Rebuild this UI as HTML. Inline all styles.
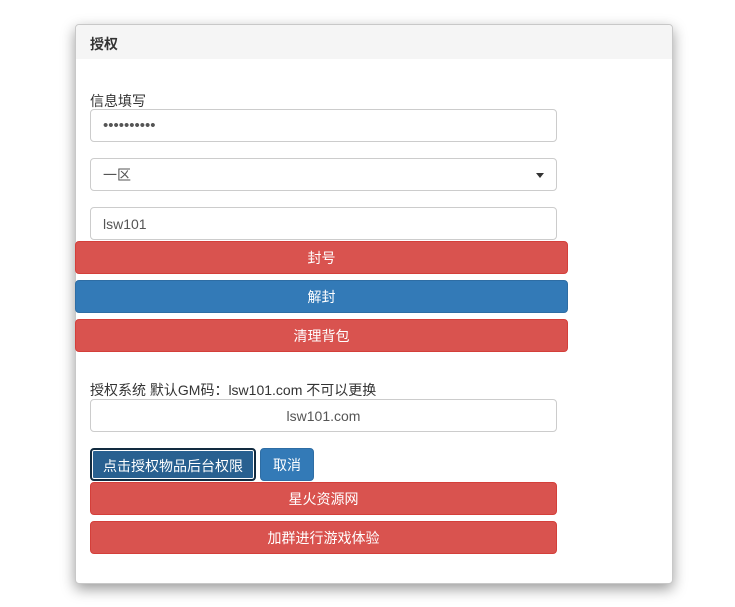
<!DOCTYPE html>
<html><head><meta charset="utf-8"><style>
*{box-sizing:border-box;margin:0;padding:0}
body{width:735px;height:607px;background:#fff;font-family:"Liberation Sans","Noto Sans CJK SC",sans-serif;font-size:14px;color:#333;position:relative;overflow:hidden}
.card{position:absolute;left:75px;top:24px;width:598px;height:560px;border:1px solid #c8c8c8;border-radius:4px;background:#fff;box-shadow:0 5px 14px rgba(0,0,0,.4)}
.hd{position:absolute;left:0;top:0;right:0;height:34px;background:#f5f5f5;border-radius:4px 4px 0 0;font-weight:bold;padding:9px 14px;font-size:14px}
.a{position:absolute}
.inp{position:absolute;left:90px;width:467px;height:33px;border:1px solid #ccc;border-radius:4px;background:#fff;padding:7px 12px;color:#555;line-height:18px}
.btn{position:absolute;height:33px;border-radius:4px;color:#fff;text-align:center;line-height:32px;font-size:14px}
.r{background:#d9534f;border:1px solid #d43f3a}
.b{background:#337ab7;border:1px solid #2e6da4}
.caret{position:absolute;right:12px;top:14px;width:0;height:0;border-left:4px solid transparent;border-right:4px solid transparent;border-top:5px solid #333}
</style></head><body>
<div class="card"><div class="hd">授权</div></div>
<div class="a" style="left:90px;top:91px">信息填写</div>
<div class="inp" style="top:109px;font-size:15px;letter-spacing:0">••••••••••</div>
<div class="inp" style="top:158px">一区<span class="caret"></span></div>
<div class="inp" style="top:207px">lsw101</div>
<div class="btn r" style="left:75px;top:241px;width:493px">封号</div>
<div class="btn b" style="left:75px;top:280px;width:493px">解封</div>
<div class="btn r" style="left:75px;top:319px;width:493px">清理背包</div>
<div class="a" style="left:90px;top:380px">授权系统 默认GM码：lsw101.com 不可以更换</div>
<div class="inp" style="top:399px;text-align:center">lsw101.com</div>
<div class="btn" style="left:90px;top:448px;width:166px;background:#286090;border:2px solid #122b40;box-shadow:inset 0 0 0 1px #fff">点击授权物品后台权限</div>
<div class="btn b" style="left:260px;top:448px;width:54px">取消</div>
<div class="btn r" style="left:90px;top:482px;width:467px">星火资源网</div>
<div class="btn r" style="left:90px;top:521px;width:467px">加群进行游戏体验</div>
</body></html>
